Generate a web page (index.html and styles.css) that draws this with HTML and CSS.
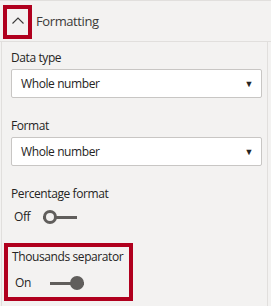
FILE: index.html
```html
<!DOCTYPE html>
<html>
<head>
<meta charset="utf-8">
<link rel="stylesheet" href="styles.css">
</head>
<body>
<div class="panel">
  <div class="header">
    <span class="hl-box">
      <svg width="12" height="7" viewBox="0 0 12 7"><path d="M0.5 6.5 L6 1 L11.5 6.5" fill="none" stroke="#3b3a39" stroke-width="1.1"/></svg>
    </span>
    <span class="title">Formatting</span>
  </div>
  <div class="body">
    <div class="field">
      <div class="label">Data type</div>
      <div class="select"><span>Whole number</span><span class="arrow">▼</span></div>
    </div>
    <div class="field">
      <div class="label">Format</div>
      <div class="select"><span>Whole number</span><span class="arrow">▼</span></div>
    </div>
    <div class="field tog">
      <div class="label">Percentage format</div>
      <div class="toggle-row"><span class="state">Off</span><span class="switch off"><span class="knob"></span></span></div>
    </div>
    <div class="field tog highlight">
      <div class="label">Thousands separator</div>
      <div class="toggle-row"><span class="state">On</span><span class="switch on"><span class="knob"></span></span></div>
    </div>
  </div>
</div>
</body>
</html>
```
FILE: styles.css
```css
html, body {
  margin: 0;
  padding: 0;
  background: #f3f2f1;
}
body {
  font-family: "Open Sans", "Noto Sans", sans-serif;
  font-size: 12px;
  letter-spacing: -0.4px;
  line-height: 16px;
  color: #252423;
  width: 271px;
  height: 306px;
  overflow: hidden;
}
.panel {
  border-top: 1px solid #e1dfdd;
}
.header {
  height: 40px;
  display: flex;
  align-items: center;
  border-bottom: 1px solid #e1dfdd;
}
.hl-box {
  box-sizing: border-box;
  width: 29px;
  height: 34px;
  margin-left: 3px;
  margin-top: 1px;
  border: 4px solid #b0001e;
  display: flex;
  align-items: center;
  justify-content: center;
}
.hl-box svg {
  display: block;
  margin-top: -2px;
}
.title {
  margin-left: 4px;
  font-size: 13px;
  color: #3b3a39;
}
.body {
  border-left: 1px solid #e1dfdd;
  border-right: 1px solid #e1dfdd;
  margin-left: 1px;
  width: 267px;
  height: 270px;
  box-sizing: border-box;
  padding-top: 8px;
  padding-left: 9px;
}
.label {
  height: 16px;
  color: #252423;
}
.field {
  margin-bottom: 20px;
}
.select {
  box-sizing: border-box;
  margin-top: 3px;
  width: 251px;
  height: 29px;
  background: #fff;
  border: 1px solid #c8c6c4;
  border-radius: 2px;
  display: flex;
  align-items: center;
  justify-content: space-between;
  padding: 0 8px 0 9px;
  color: #252423;
}
.arrow {
  font-size: 9px;
  color: #252423;
}
.toggle-row {
  display: flex;
  align-items: center;
  height: 20px;
  margin-top: 5px;
  padding-left: 3px;
}
.state {
  width: 25px;
  color: #252423;
}
.switch {
  position: relative;
  display: block;
  width: 34px;
  height: 14px;
}
.switch::before {
  content: "";
  position: absolute;
  left: 0;
  right: 0;
  top: 6px;
  height: 3px;
  background: #605e5c;
}
.knob {
  position: absolute;
  top: 0;
  width: 14px;
  height: 14px;
  box-sizing: border-box;
  border-radius: 50%;
}
.switch.off {
  margin-left: 4px;
}
.switch.off .knob {
  left: 0;
  border: 3px solid #605e5c;
  background: #f3f2f1;
}
.switch.on {
  margin-left: 10px;
}
.switch.on .knob {
  right: 0;
  background: #605e5c;
}
.field.tog {
  margin-bottom: 0;
}
.highlight {
  box-sizing: border-box;
  width: 129px;
  height: 58px;
  margin-left: -7px;
  margin-top: 16px;
  border: 4px solid #b0001e;
  padding: 2px 0 0 4px;
}
.highlight .toggle-row {
  margin-top: 8px;
}
```
